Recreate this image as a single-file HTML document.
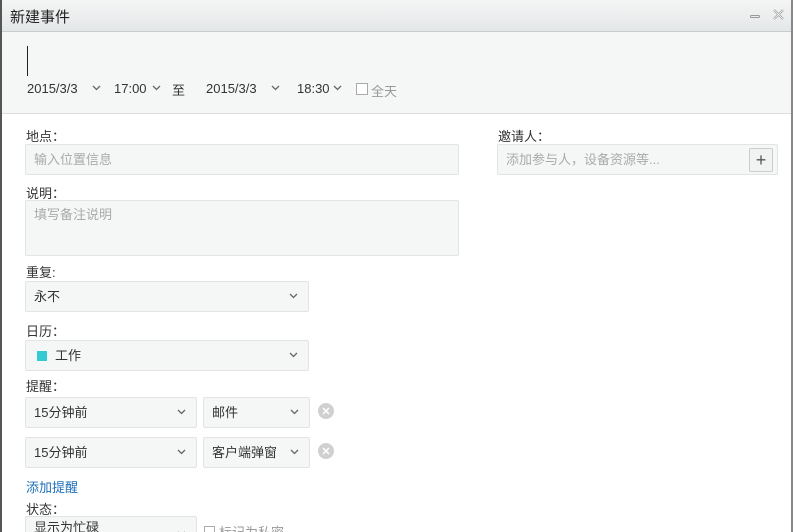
<!DOCTYPE html><html><head><meta charset="utf-8"><style>
*{box-sizing:border-box;margin:0;padding:0}
html,body{width:793px;height:532px;overflow:hidden}
body{background:#fff;font-family:"Liberation Sans","Noto Sans CJK SC",sans-serif;font-size:13px;color:#333;position:relative}
.a{position:absolute}
.box{position:absolute;background:#f5f6f6;border:1px solid #e2e4e4;border-radius:2px;color:#333;padding-left:8px;line-height:29px;font-size:13px}
.ph{color:#aaa}
.ch{position:absolute;right:10px;top:11px;width:9px;height:6px}
.lbl{position:absolute;left:26px;font-size:13px;color:#333}
.x{position:absolute;width:16px;height:16px;border-radius:50%;background:#d0d0d0}
</style></head><body>
<svg width="0" height="0" style="position:absolute"><defs><symbol id="c" viewBox="0 0 9 6"><path d="M1 1L4.5 4.5L8 1" fill="none" stroke="#666" stroke-width="1.3"/></symbol></defs></svg>
<div class="a" style="left:0;top:0;width:2px;height:532px;background:#555"></div>
<div class="a" style="right:0;top:0;width:2px;height:532px;background:#888"></div>
<div class="a" style="left:2px;top:0;width:789px;height:32px;background:linear-gradient(#f4f5f5,#e4e7e8);border-bottom:1px solid #c9cccd"></div>
<div class="a" style="left:10px;top:6px;font-size:15px;color:#222">新建事件</div>
<div class="a" style="left:750px;top:15px;width:10px;height:3px;border:1px solid #999;border-radius:2px"></div>
<svg class="a" style="left:773px;top:9px" width="11" height="11"><path d="M1 1L10 10M10 1L1 10" stroke="#999" stroke-width="2.2"/><path d="M1 1L10 10M10 1L1 10" stroke="#fff" stroke-width="0.8"/></svg>
<div class="a" style="left:2px;top:32px;width:789px;height:82px;background:#f5f6f6;border-bottom:1px solid #dcdfe0"></div>
<div class="a" style="left:27px;top:46px;width:1px;height:30px;background:#222"></div>
<div class="a" style="left:27px;top:81px">2015/3/3</div>
<svg class="a" style="left:92px;top:85px" width="9" height="6"><use href="#c"/></svg>
<div class="a" style="left:114px;top:81px">17:00</div>
<svg class="a" style="left:152px;top:85px" width="9" height="6"><use href="#c"/></svg>
<div class="a" style="left:172px;top:80px">至</div>
<div class="a" style="left:206px;top:81px">2015/3/3</div>
<svg class="a" style="left:271px;top:85px" width="9" height="6"><use href="#c"/></svg>
<div class="a" style="left:297px;top:81px">18:30</div>
<svg class="a" style="left:333px;top:85px" width="9" height="6"><use href="#c"/></svg>
<div class="a" style="left:356px;top:83px;width:12px;height:12px;border:1px solid #aaa;background:#fff"></div>
<div class="a" style="left:371px;top:81px;color:#999">全天</div>

<div class="lbl" style="top:126px">地点：</div>
<div class="box ph" style="left:25px;top:144px;width:434px;height:31px">输入位置信息</div>
<div class="lbl" style="top:183px">说明：</div>
<div class="box ph" style="left:25px;top:200px;width:434px;height:56px;line-height:28px">填写备注说明</div>
<div class="a" style="left:498px;top:126px">邀请人：</div>
<div class="box ph" style="left:497px;top:144px;width:281px;height:31px">添加参与人，设备资源等...</div>
<div class="a" style="left:749px;top:148px;width:24px;height:24px;border:1px solid #ccc;border-radius:2px;background:#f1f2f2;text-align:center;line-height:22px;font-size:18px;color:#555">+</div>

<div class="lbl" style="top:262px">重复:</div>
<div class="box" style="left:25px;top:281px;width:284px;height:31px">永不<svg class="ch"><use href="#c"/></svg></div>
<div class="lbl" style="top:321px">日历：</div>
<div class="box" style="left:25px;top:340px;width:284px;height:31px"><span style="display:inline-block;width:10px;height:10px;background:#35c9d4;margin:0 8px 0 3px;vertical-align:-1px"></span>工作<svg class="ch"><use href="#c"/></svg></div>
<div class="lbl" style="top:376px">提醒：</div>
<div class="box" style="left:25px;top:397px;width:172px;height:31px">15分钟前<svg class="ch"><use href="#c"/></svg></div>
<div class="box" style="left:203px;top:397px;width:107px;height:31px">邮件<svg class="ch"><use href="#c"/></svg></div>
<svg class="a" style="left:318px;top:403px" width="16" height="16"><circle cx="8" cy="8" r="8" fill="#d0d0d0"/><path d="M5 5L11 11M11 5L5 11" stroke="#fff" stroke-width="1.5"/></svg>
<div class="box" style="left:25px;top:437px;width:172px;height:31px">15分钟前<svg class="ch"><use href="#c"/></svg></div>
<div class="box" style="left:203px;top:437px;width:107px;height:31px">客户端弹窗<svg class="ch"><use href="#c"/></svg></div>
<svg class="a" style="left:318px;top:443px" width="16" height="16"><circle cx="8" cy="8" r="8" fill="#d0d0d0"/><path d="M5 5L11 11M11 5L5 11" stroke="#fff" stroke-width="1.5"/></svg>
<div class="lbl" style="top:477px;color:#1e6fb8">添加提醒</div>
<div class="lbl" style="top:499px">状态：</div>
<div class="box" style="left:25px;top:516px;width:172px;height:31px;line-height:22px">显示为忙碌<svg class="ch" style="top:14px"><use href="#c"/></svg></div>
<div class="a" style="left:204px;top:526px;width:11px;height:11px;border:1px solid #aaa"></div>
<div class="a" style="left:219px;top:522px;color:#999">标记为私密</div>
</body></html>
